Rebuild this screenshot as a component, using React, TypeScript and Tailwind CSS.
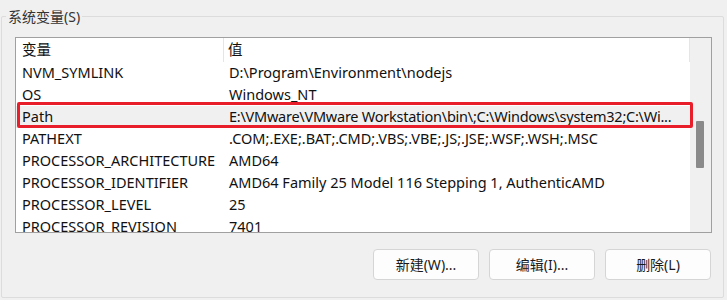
const rows: [string, string][] = [
  ["NVM_SYMLINK", "D:\\Program\\Environment\\nodejs"],
  ["OS", "Windows_NT"],
  ["Path", "E:\\VMware\\VMware Workstation\\bin\\;C:\\Windows\\system32;C:\\Wi..."],
  ["PATHEXT", ".COM;.EXE;.BAT;.CMD;.VBS;.VBE;.JS;.JSE;.WSF;.WSH;.MSC"],
  ["PROCESSOR_ARCHITECTURE", "AMD64"],
  ["PROCESSOR_IDENTIFIER", "AMD64 Family 25 Model 116 Stepping 1, AuthenticAMD"],
  ["PROCESSOR_LEVEL", "25"],
  ["PROCESSOR_REVISION", "7401"],
];

const font = { fontFamily: '"Noto Sans", "Noto Sans CJK SC", sans-serif' };

const App = () => {
  return (
    <div
      className="w-[727px] h-[300px] bg-[#f0f0f0] overflow-hidden text-[#111] pt-[16px] pl-[1px]"
      style={font}
    >
      {/* group box */}
      <div className="relative w-[723px] h-[282px] border border-[#dcdcdc] rounded-[2px] pl-[13px] pt-[20px]">
        <span className="absolute left-[4px] -top-[9px] bg-[#f0f0f0] px-[2px] text-[14px] leading-[18px] text-[#333]">
          系统变量(S)
        </span>

        {/* list view */}
        <div className="relative flex w-[697px] h-[196px] border border-[#a0a0a0] bg-white">
          <div className="w-[674px] overflow-hidden">
            <div className="flex h-[24px] items-center text-[14.5px]">
              <div className="w-[208px] h-full border-r border-[#e5e5e5] pl-[6px] flex items-center">变量</div>
              <div className="flex-1 h-full border-r border-[#e5e5e5] pl-[4px] flex items-center">值</div>
            </div>
            {rows.map(([name, value]) => (
              <div
                key={name}
                className={`flex h-[22px] items-center text-[14.5px] ${name === "Path" ? "bg-[#f0f0f0]" : ""}`}
              >
                <div className="w-[208px] pl-[6px] whitespace-nowrap">{name}</div>
                <div
                  className={`flex-1 pl-[5px] whitespace-nowrap overflow-hidden ${name === "Path" ? "tracking-[-0.25px]" : ""}`}
                >
                  {value}
                </div>
              </div>
            ))}
          </div>
          {/* scrollbar */}
          <div className="w-[21px] bg-[#f0f0f0] pl-[6px] pt-[83px]">
            <div className="w-[8px] h-[47px] bg-[#8a8a8a] rounded-[1px]" />
          </div>

          {/* red annotation box */}
          <div className="absolute left-[1px] top-[64px] w-[676px] h-[26px] border-[3px] border-[#e81e2a] rounded-[2px]" />
        </div>

        {/* buttons */}
        <div className="flex justify-end gap-[10px] pr-[12px] mt-[16px]">
          {["新建(W)...", "编辑(I)...", "删除(L)"].map((label) => (
            <button
              key={label}
              className="w-[106px] h-[31px] bg-[#fdfdfd] border border-[#d5d5d5] rounded-[4px] text-[14px] text-[#1a1a1a]"
            >
              {label}
            </button>
          ))}
        </div>
      </div>
    </div>
  );
};

export default App;
